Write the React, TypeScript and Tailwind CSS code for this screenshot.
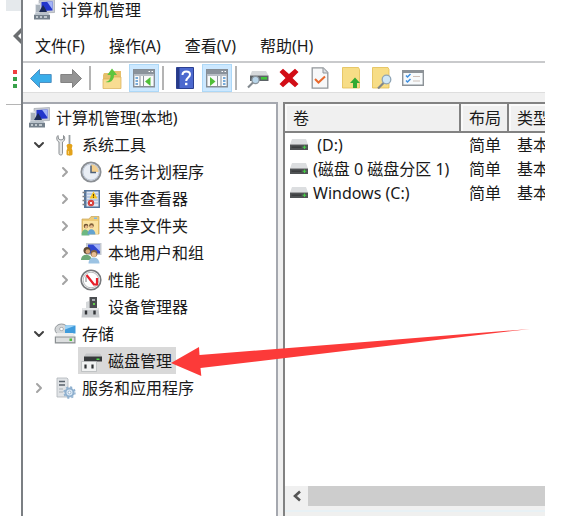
import React from 'react';
import { ChevronDown, ChevronRight } from 'lucide-react';
import clsx from 'clsx';

type IconProps = { className?: string };

const ComputerIcon: React.FC<IconProps> = ({ className }) => (
  <svg viewBox="0 0 22 22" className={clsx('h-[22px] w-[22px] shrink-0', className)}>
    <path d="M6 1.500 21.500.5v13L7 14z" fill="#c9cdd6" stroke="#a2a6ae" strokeWidth=".7" />
    <path d="M8.500 3l11-.6v9L8.500 12z" fill="#2336cc" />
    <path d="M14 2.700l5.500-.3v8z" fill="#a3b3f7" />
    <path d="M2 5.500l5-1.500v10H2z" fill="#dfe3e8" />
    <path d="M3 6h4v7H3z" fill="#aab3bc" />
    <path d="M6 13l4-7 2 3 2 4z" fill="#1b2a55" />
    <path d="M1 16h16v4.500H1z" fill="#74808b" />
    <path d="M3 13.500h12l2 2.500H1z" fill="#b9c2ca" />
    <path d="M3 18h2M7 18h2M11 18h3" stroke="#d7dee4" strokeWidth="1.300" />
  </svg>
);

const ToolsIcon: React.FC<IconProps> = () => (
  <svg viewBox="0 0 22 22" className="h-[22px] w-[22px] shrink-0">
    <path d="M4 1.500C2 3 2.500 7 5 8v11.500c0 2 3.500 2 3.500 0V8C11 7 11.500 3 9.500 1.500V5L7 6 4.500 5z" fill="#e3e5e6" stroke="#8b8f92" strokeWidth="1" />
    <path d="M15.500 1v10" stroke="#9aa0a4" strokeWidth="1.800" />
    <path d="M12.500 11.500l1.200-1.500h3.600l1.200 1.500-.8 3 .8 2v4c-1 1.600-5 1.600-6 0v-4l.8-2z" fill="#e3a21a" />
    <path d="M14.500 17v3" stroke="#f6cf73" />
  </svg>
);

const ClockIcon: React.FC<IconProps> = () => (
  <svg viewBox="0 0 22 22" className="h-[22px] w-[22px] shrink-0">
    <circle cx="11" cy="11" r="9.600" fill="#e9eef5" stroke="#8b8f94" strokeWidth="1.900" />
    <path d="M11 11V3a8 8 0 0 1 8 8z" fill="#f4cf8d" />
    <circle cx="11" cy="11" r="8" fill="none" stroke="#b7c3d3" strokeWidth=".8" />
    <path d="M11 4.500V11.500h5" fill="none" stroke="#4e6077" strokeWidth="1.500" />
  </svg>
);

const EventIcon: React.FC<IconProps> = () => (
  <svg viewBox="0 0 22 22" className="h-[22px] w-[22px] shrink-0">
    <path d="M4 2h16v18H4z" fill="#54759b" />
    <path d="M6.500 3.500H18.500v15H6.500z" fill="#dfe7f3" />
    <path d="M7 6h11M7 9h11M7 12h11M7 15h11" stroke="#8ca7d2" strokeWidth=".9" />
    <path d="M2.500 4.500h3M2.500 8.500h3M2.500 12.500h3M2.500 16.500h3" stroke="#7d8085" strokeWidth="1.300" />
    <path d="M13.500 3.500l4 7h-8z" fill="#f7c51b" />
    <path d="M13.500 6v2.500M13.500 9.200v.8" stroke="#5b4100" strokeWidth="1" />
    <circle cx="11" cy="15" r="3.200" fill="#d6403b" />
    <path d="M9.900 13.900l2.200 2.200m0-2.200l-2.200 2.200" stroke="#fff" strokeWidth=".9" />
  </svg>
);

const SharedFolderIcon: React.FC<IconProps> = () => (
  <svg viewBox="0 0 22 22" className="h-[22px] w-[22px] shrink-0">
    <path d="M2 4h7l2-2.500h8V19H2z" fill="#eecb78" stroke="#c8a353" strokeWidth=".7" />
    <path d="M3 6h15v13H3z" fill="#fbe3a1" />
    <path d="M14 2.500h3V4h-3z" fill="#7cb8e8" />
    <circle cx="6" cy="11" r="2.300" fill="#6f5432" />
    <circle cx="11.500" cy="10.500" r="2.300" fill="#7d5c38" />
    <circle cx="6.300" cy="11.800" r="1.500" fill="#e8b98b" />
    <circle cx="11.500" cy="11.500" r="1.500" fill="#e8b98b" />
    <path d="M1.500 20.500c0-8 7.500-8 8 0z" fill="#6db881" />
    <path d="M7.500 19.500c0-7 7.500-7 8 0z" fill="#65a3cf" />
  </svg>
);

const UsersIcon: React.FC<IconProps> = () => (
  <svg viewBox="0 0 22 22" className="h-[22px] w-[22px] shrink-0">
    <path d="M6 1h15.500v12H6z" fill="#c4c9d0" />
    <path d="M8 2.500h12v9H8z" fill="#2f46d0" />
    <path d="M13 2.500h7v7z" fill="#a3b3f7" />
    <circle cx="7" cy="8.500" r="3.500" fill="#5d4a34" />
    <circle cx="7.800" cy="9.500" r="2.300" fill="#d9a77a" />
    <path d="M1 18c0-7 10-7 11 0z" fill="#6ea878" />
    <circle cx="14" cy="11.500" r="3.400" fill="#806040" />
    <circle cx="14" cy="12.500" r="2.500" fill="#e9bd93" />
    <path d="M8.500 21.500c0-8 10.500-8 11 0z" fill="#9cc3e3" />
  </svg>
);

const GaugeIcon: React.FC<IconProps> = () => (
  <svg viewBox="0 0 22 22" className="h-[22px] w-[22px] shrink-0">
    <circle cx="11" cy="11" r="9.800" fill="#fafafa" stroke="#77797c" strokeWidth="1.600" />
    <circle cx="11" cy="11" r="7.800" fill="#fff" stroke="#b9bbbd" />
    <path d="M6 13V7.500" stroke="#7d8083" strokeWidth="1" />
    <path d="M6.500 6l7.500 9.500M17 9v6.500h-4" fill="none" stroke="#e8202a" strokeWidth="2.200" />
  </svg>
);

const DeviceIcon: React.FC<IconProps> = () => (
  <svg viewBox="0 0 22 22" className="h-[22px] w-[22px] shrink-0">
    <path d="M6 6l3-1v7H6z" fill="#d5d8da" />
    <path d="M9.500 1H17v12H9.500z" fill="#4a4d50" />
    <path d="M12 3h3v2h-3z" fill="#a7acb0" />
    <path d="M13 7h2v2h-2z" fill="#61cf4a" />
    <path d="M2.500 12h16l1 9.500h-18z" fill="#c6c9cc" />
    <path d="M2.500 12h16v2h-16z" fill="#e5e7e9" />
    <path d="M6 14.500v4M14.500 14.500v4" stroke="#303336" strokeWidth="2.400" />
  </svg>
);

const StorageIcon: React.FC<IconProps> = () => (
  <svg viewBox="0 0 22 22" className="h-[22px] w-[22px] shrink-0">
    <ellipse cx="7.500" cy="6.500" rx="6.500" ry="5.500" fill="#d3d6d8" stroke="#94999d" />
    <ellipse cx="7.500" cy="6" rx="2" ry="1.600" fill="#fff" stroke="#94999d" strokeWidth=".7" />
    <path d="M11 2.500h10.500v8H11z" fill="#3f9bdc" />
    <path d="M11 2.500h10.500L11 6.500z" fill="#9ed3f6" />
    <path d="M3 10h16l2.500 3.500H1z" fill="#eceded" />
    <path d="M.8 13.500h20.700v7H.8z" fill="#8a8f92" />
    <path d="M2 14.500h18.300v4.700H2z" fill="#dcdedf" />
    <path d="M15.500 15.500h2.500v2.500h-2.500z" fill="#4dbf3a" />
  </svg>
);

const DiskMgmtIcon: React.FC<IconProps> = () => (
  <svg viewBox="0 0 22 22" className="h-[22px] w-[22px] shrink-0">
    <path d="M6 3.500h14l2 3H4z" fill="#c4c6c7" />
    <path d="M4 6.500h18v5H4z" fill="#36393b" />
    <path d="M16.500 8.500h3v1.500h-3z" fill="#4fdb49" />
    <path d="M1.500 11.500h15v10h-15z" fill="#f1f2f2" stroke="#b0b3b5" strokeWidth=".7" />
    <path d="M5.500 14.500v4M12.500 14.500v4" stroke="#2e3133" strokeWidth="2.200" />
  </svg>
);

const ServicesIcon: React.FC<IconProps> = () => (
  <svg viewBox="0 0 22 22" className="h-[22px] w-[22px] shrink-0">
    <path d="M3 1h10l1 1v18H3z" fill="#e0e3e6" stroke="#aeb4b9" strokeWidth=".8" />
    <path d="M5 4.500h6M5 8h6" stroke="#58626b" strokeWidth="1.400" />
    <path d="M5 12h4M5 15h4" stroke="#a9b0b6" />
    <circle cx="15.500" cy="15.500" r="4" fill="#dce9f5" stroke="#8fb0cf" strokeWidth="2" />
    <circle cx="15.500" cy="15.500" r="5.500" fill="none" stroke="#8fb0cf" strokeWidth="1.400" strokeDasharray="2.160 2.160" />
    <circle cx="15.500" cy="15.500" r="1.400" fill="#fff" stroke="#7b9dbf" strokeWidth=".7" />
  </svg>
);

const DriveIcon: React.FC<IconProps> = () => (
  <svg viewBox="0 0 18 12" className="h-3 w-[18px] shrink-0">
    <path d="M2 0h14l2 5.500H0z" fill="#dcdee0" />
    <path d="M0 5.500h18V11H0z" fill="#505355" />
    <path d="M1.500 8.200h10" stroke="#3a3d3f" strokeWidth="1.500" />
    <path d="M12.700 8.200h3.600M14.500 6.400v3.600" stroke="#43d043" strokeWidth="1.100" />
  </svg>
);

const ArrowIcon: React.FC<{ forward?: boolean }> = ({ forward }) => (
  <svg viewBox="0 0 22 20" className="h-5 w-[22px]">
    {forward ? (
      <path d="M21.500 10.500 12.500 1.500v5H.8v8h11.700v5z" fill="#949494" stroke="#7a7a7a" strokeWidth=".9" />
    ) : (
      <path d="M.5 10.500l9-9v5h11.700v8H9.500v5z" fill="#3aaeea" stroke="#4688bb" strokeWidth=".9" />
    )}
  </svg>
);

const FolderUpIcon: React.FC<IconProps> = () => (
  <svg viewBox="0 0 22 22" className="h-[22px] w-[22px]">
    <path d="M2 8l1-2h7l2-2h8v17H2z" fill="#e6c06c" />
    <path d="M2 12h9l2-2h7v11.500H2z" fill="#f8dc92" stroke="#d8ad54" strokeWidth=".7" />
    <path d="M4.500 15c4.500-1 5-4 5-7H6.300l4.700-6.500L16 8h-3c0 5-3.500 8.500-8.500 7z" fill="#5cc53d" />
  </svg>
);

const PaneIcon: React.FC<{ right?: boolean }> = ({ right }) => (
  <svg viewBox="0 0 22 20" className="h-5 w-[22px]">
    <path d="M.7 1.700h20.600v17H.7z" fill="#f9fafb" stroke="#868d95" strokeWidth="1.400" />
    <path d="M1 2h20v4H1z" fill="#8a929b" />
    <path d="M1 7h20" stroke="#b8bec5" strokeWidth="2" />
    <path d="M15.500 3.500H17M18.500 3.500H20" stroke="#fff" />
    {right ? (
      <>
        <path d="M15 8v11M11.500 8v11" stroke="#8a929b" />
        <path d="M17 10h2.500M17 13h2.500M17 16h2.500" stroke="#4c90ce" strokeWidth="1.500" />
        <path d="M4 9l5.500 4.500L4 18z" fill="#4fbf38" />
      </>
    ) : (
      <>
        <path d="M7 8v11M10.500 8v11" stroke="#8a929b" />
        <path d="M2.500 10H5M2.500 13H5M2.500 16H5" stroke="#4c90ce" strokeWidth="1.500" />
        <path d="M17.500 9L12 13.500l5.500 4.500z" fill="#4fbf38" />
      </>
    )}
  </svg>
);

const HelpIcon: React.FC<IconProps> = () => (
  <svg viewBox="0 0 18 22" className="h-[22px] w-[18px]">
    <path d="M.5.500h17v21H.5z" fill="#4c69cf" stroke="#2b3f91" />
    <path d="M1 1h2.500v20H1z" fill="#263a88" />
    <path d="M6.500 8c0-5 7.500-4.500 7.500-.5 0 3-3.800 3-3.800 6.500" fill="none" stroke="#fff" strokeWidth="2" />
    <path d="M10.200 15.800v2.400" stroke="#fff" strokeWidth="2.400" />
  </svg>
);

const DriveSearchIcon: React.FC<IconProps> = () => (
  <svg viewBox="0 0 22 22" className="h-[22px] w-[22px]">
    <path d="M5 4h14l2.500 4.500H3z" fill="#d6d9db" />
    <path d="M3 8.500h18.500V14H3z" fill="#5d6367" />
    <path d="M14 10h6v2.500h-6z" fill="#3fc43a" />
    <circle cx="8.500" cy="13" r="3.600" fill="#b9d6ea" stroke="#8a949c" strokeWidth="1.200" />
    <path d="M6 15.500l-5 5" stroke="#82898f" strokeWidth="2.200" />
  </svg>
);

const DeleteIcon: React.FC<IconProps> = () => (
  <svg viewBox="0 0 20 20" className="h-5 w-5">
    <path d="M4 .8L10 6l6-5.200L19.500 4l-6 6 6 6-3.500 3.200L10 14l-6 5.200L.5 16l6-6-6-6z" fill="#d20d16" />
  </svg>
);

const DocCheckIcon: React.FC<IconProps> = () => (
  <svg viewBox="0 0 18 22" className="h-[22px] w-[18px]">
    <path d="M1.200.8h11L16.800 5.500v15.700H1.200z" fill="#f7f8f9" stroke="#92979b" strokeWidth="1.300" />
    <path d="M12 1v5h4.800" fill="#dcdfe2" stroke="#92979b" />
    <path d="M4 12l3.500 3.500L14 9.500" fill="none" stroke="#e8692d" strokeWidth="2" />
  </svg>
);

const FolderArrowIcon: React.FC<IconProps> = () => (
  <svg viewBox="0 0 18 22" className="h-[22px] w-[18px]">
    <path d="M.5.500h16l1 2V21H.5z" fill="#f7dd86" stroke="#e2bc51" strokeWidth=".8" />
    <path d="M13 10.500l5 5.500h-3v5h-4v-5H8z" fill="#31aa33" />
  </svg>
);

const FolderSearchIcon: React.FC<IconProps> = () => (
  <svg viewBox="0 0 20 22" className="h-[22px] w-5">
    <path d="M.5.500h15.500l1 2V21H.5z" fill="#f7dd86" stroke="#e2bc51" strokeWidth=".8" />
    <path d="M12 15.500l-6 6" stroke="#81868a" strokeWidth="2.200" />
    <circle cx="14.500" cy="12.500" r="4.300" fill="#cfe7f8" stroke="#8fa5b6" strokeWidth="1.300" />
  </svg>
);

const ChecklistIcon: React.FC<IconProps> = () => (
  <svg viewBox="0 0 22 16" className="h-4 w-[22px]">
    <path d="M.7.700h20.600v14.600H.7z" fill="#f7fafc" stroke="#8c9297" strokeWidth="1.400" />
    <path d="M1 1h20v2H1z" fill="#8c9297" />
    <path d="M4 5.500L5.500 7 8.500 4M4 10.500L5.500 12l3-3" fill="none" stroke="#3d8fe0" strokeWidth="1.500" />
    <path d="M11 6.500h7M11 11h7" stroke="#cdbfb8" strokeWidth="1.200" />
  </svg>
);

const menus = ['文件(F)', '操作(A)', '查看(V)', '帮助(H)'];

const systemTools = [
  { label: '任务计划程序', icon: <ClockIcon />, open: false },
  { label: '事件查看器', icon: <EventIcon />, open: false },
  { label: '共享文件夹', icon: <SharedFolderIcon />, open: false },
  { label: '本地用户和组', icon: <UsersIcon />, open: false },
  { label: '性能', icon: <GaugeIcon />, open: false },
  { label: '设备管理器', icon: <DeviceIcon /> },
];

const volumes = [
  { name: '\u00a0(D:)', layout: '简单', type: '基本' },
  { name: '(磁盘 0 磁盘分区 1)', layout: '简单', type: '基本' },
  { name: 'Windows (C:)', layout: '简单', type: '基本' },
];

const ToolButton: React.FC<{ label: string; active?: boolean; children: React.ReactNode }> = ({ label, active, children }) => (
  <button
    type="button"
    aria-label={label}
    className={clsx('flex h-7 w-[30px] shrink-0 items-center justify-center', active && 'border border-[#add8f7] bg-[#cce8ff]')}
  >
    {children}
  </button>
);

const Divider = () => <div className="mr-1.5 ml-[3px] h-6 w-0.5 shrink-0 bg-[#b4b4b4]" />;

type TreeItemProps = {
  label: string;
  icon: React.ReactNode;
  open?: boolean;
  selected?: boolean;
  children?: React.ReactNode;
};

// open is left undefined for leaves, which have no chevron
const TreeItem: React.FC<TreeItemProps> = ({ label, icon, open, selected, children }) => (
  <li>
    <div className="flex h-[27px] items-center">
      <span className="flex w-6 shrink-0 items-center pl-[3px]">
        {open === true && <ChevronDown className="h-4 w-4 text-[#404040]" strokeWidth={3} />}
        {open === false && <ChevronRight className="h-4 w-4 text-[#a3a3a3]" strokeWidth={3} />}
      </span>
      <button
        type="button"
        className={clsx('flex h-[27px] items-center gap-1.5 pr-1 pl-0.5 whitespace-nowrap', selected && 'bg-[#d9d9d9]')}
      >
        {icon}
        {label}
      </button>
    </div>
    {children && <ul className="pl-[26px]">{children}</ul>}
  </li>
);

// Sliver of the window that lies behind this one
const BackgroundWindow = () => (
  <div className="flex w-[21px] shrink-0 flex-col items-end pl-1.5">
    <div className="h-[11px] w-full bg-[#e5e9ec]" />
    <svg viewBox="0 0 8 16" className="mt-[17px] h-4 w-2">
      <path d="M8 0v5L5 8l3 3v5L0 8z" fill="#6b6e70" />
    </svg>
    <div className="mt-[26px] flex w-2 flex-col gap-[3px]">
      <span className="h-1 w-1 bg-[#f04040]" />
      <span className="h-1 w-1 bg-[#37a14a]" />
      <span className="h-1 w-1 bg-[#37a14a]" />
    </div>
    <div className="mt-4 h-px w-full bg-[#b5b5b5]" />
  </div>
);

const App: React.FC = () => {
  return (
    <div className="flex h-screen bg-white pr-[34px] pb-[5px] font-['Noto_Sans','Noto_Sans_CJK_SC',sans-serif] text-base leading-6 text-[#1a1a1a]">
      <BackgroundWindow />
      <main className="relative flex min-w-0 flex-1 flex-col border-l-2 border-[#7b7f83]">
        <header className="mb-2.5 flex h-5 items-center gap-1.5 pl-2.5">
          <ComputerIcon />
          <h1>计算机管理</h1>
        </header>

        <nav className="flex h-[33px] shrink-0 items-center border-b-2 border-[#c9cacc]">
          {menus.map((menu) => (
            <button key={menu} type="button" className="px-3 whitespace-nowrap">
              {menu}
            </button>
          ))}
        </nav>

        <div className="flex h-[30px] shrink-0 items-center border-b border-[#dedede] pl-[3px]">
          <ToolButton label="后退"><ArrowIcon /></ToolButton>
          <ToolButton label="前进"><ArrowIcon forward /></ToolButton>
          <Divider />
          <ToolButton label="向上"><FolderUpIcon /></ToolButton>
          <div className="w-0.5 shrink-0" />
          <ToolButton label="显示/隐藏控制台树" active><PaneIcon /></ToolButton>
          <Divider />
          <ToolButton label="帮助"><HelpIcon /></ToolButton>
          <div className="w-0.5 shrink-0" />
          <ToolButton label="显示/隐藏操作窗格" active><PaneIcon right /></ToolButton>
          <Divider />
          <div className="flex gap-px">
            <ToolButton label="重新扫描"><DriveSearchIcon /></ToolButton>
            <ToolButton label="删除"><DeleteIcon /></ToolButton>
            <ToolButton label="属性"><DocCheckIcon /></ToolButton>
            <ToolButton label="打开"><FolderArrowIcon /></ToolButton>
            <ToolButton label="浏览"><FolderSearchIcon /></ToolButton>
            <ToolButton label="设置"><ChecklistIcon /></ToolButton>
          </div>
        </div>

        <div className="flex min-h-0 flex-1 bg-[#f0f0f0] pt-[9px]">
          <aside className="w-[255px] shrink-0 border-t-2 border-r-2 border-[#a5a8af] bg-white pl-[5px]">
            <div className="flex h-[27px] items-center gap-1.5 whitespace-nowrap">
              <ComputerIcon />
              计算机管理(本地)
            </div>
            <ul>
              <TreeItem label="系统工具" icon={<ToolsIcon />} open>
                {systemTools.map((tool) => (
                  <TreeItem key={tool.label} {...tool} />
                ))}
              </TreeItem>
              <TreeItem label="存储" icon={<StorageIcon />} open>
                <TreeItem label="磁盘管理" icon={<DiskMgmtIcon />} selected />
              </TreeItem>
              <TreeItem label="服务和应用程序" icon={<ServicesIcon />} open={false} />
            </ul>
          </aside>

          <section className="ml-[5px] flex min-w-0 flex-1 flex-col border-t-2 border-l-2 border-[#828282] bg-white">
            <div className="min-h-0 flex-1 overflow-hidden">
              <table className="w-full table-fixed border-separate border-spacing-0 text-left whitespace-nowrap">
                <thead>
                  <tr className="h-[29px] bg-[#f0f0f0]">
                    <th className="w-[176px] border-r-2 border-b-2 border-[#828282] pl-2 font-normal shadow-[inset_2px_2px_0_#fafafa]">卷</th>
                    <th className="w-12 border-r-2 border-b-2 border-[#828282] pl-2 font-normal shadow-[inset_2px_2px_0_#fafafa]">布局</th>
                    <th className="overflow-hidden border-b-2 border-[#828282] pl-2 font-normal shadow-[inset_2px_2px_0_#fafafa]">类型</th>
                  </tr>
                </thead>
                <tbody>
                  {volumes.map((volume) => (
                    <tr key={volume.name} className="h-6">
                      <td className="pl-[5px]">
                        <div className="flex items-center gap-[5px]">
                          <DriveIcon />
                          {volume.name}
                        </div>
                      </td>
                      <td className="pl-2">{volume.layout}</td>
                      <td className="overflow-hidden pl-2">{volume.type}</td>
                    </tr>
                  ))}
                </tbody>
              </table>
            </div>
            <div className="flex h-5 shrink-0 bg-[#f0f0f0]">
              <button type="button" aria-label="向左滚动" className="flex w-[23px] items-center justify-center">
                <svg viewBox="0 0 10 12" className="h-3 w-2.5">
                  <path d="M8 1.500L3 6l5 4.500" fill="none" stroke="#555" strokeWidth="2.600" />
                </svg>
              </button>
              <div className="flex-1 bg-[#cdcdcd]" />
            </div>
            <div className="h-1 shrink-0 bg-[#f0f0f0]" />
            <div className="h-1.5 shrink-0 border-t-2 border-[#e8f1f5] bg-[#f0f0ef]" />
          </section>
        </div>

        <svg viewBox="0 0 360 50" className="pointer-events-none absolute top-[328px] left-[148px] h-[50px] w-[360px]">
          <path d="M0 35L28 19l.5 8L359 1 29.500 40l.8 8z" fill="#fc3a39" />
        </svg>
      </main>
    </div>
  );
};

export default App;
